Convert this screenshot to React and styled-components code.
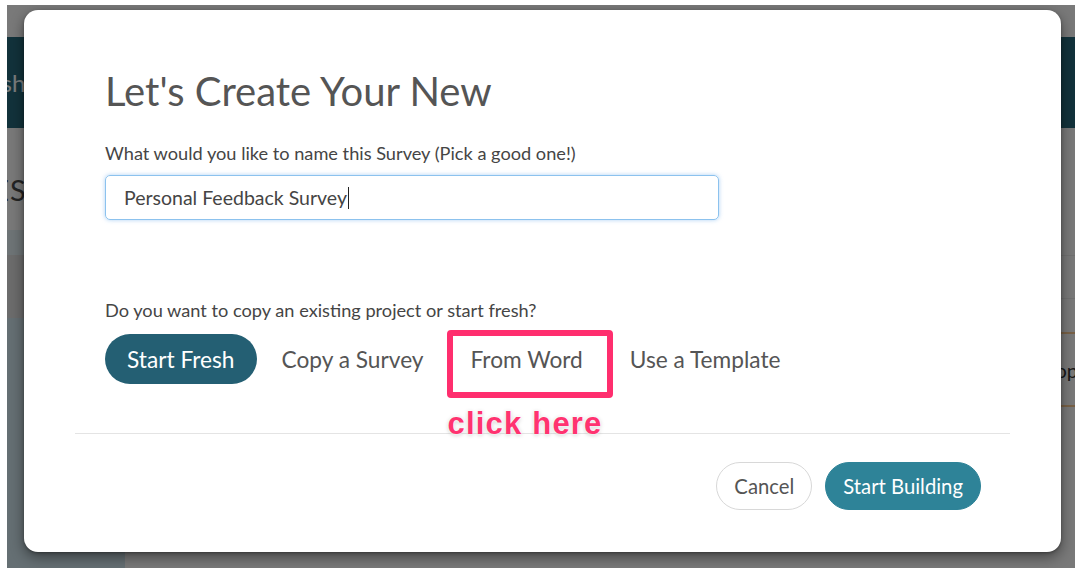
import React from "react";
import styled, { createGlobalStyle } from "styled-components";

const GlobalStyle = createGlobalStyle`
  html, body {
    margin: 0;
    padding: 0;
    background: #ffffff;
  }
  body {
    font-family: "Lato", "Noto Sans", sans-serif;
  }
  * { box-sizing: border-box; }
`;

/* ---------- page behind the dialog ---------- */

const Screen = styled.div`
  padding: 5px 0 0 7px;
  width: 1075px;
  height: 568px;
  overflow: hidden;
`;

const Frame = styled.div`
  position: relative;
  height: 563px;
  display: grid;
  grid-template-rows: 32px 91px 1fr;
  background: #f2f2f2;
  overflow: hidden;
`;

const TopStrip = styled.div`
  background: #f2f2f2;
`;

const Header = styled.header`
  background: #246477;
  display: flex;
  align-items: center;
  color: #f4f8f9;
  font-size: 24px;
  overflow: hidden;
`;

const HeaderTab = styled.span`
  margin-left: -58px;
  white-space: nowrap;
`;

const Body = styled.div`
  display: grid;
  grid-template-columns: 118px 1fr;
  min-height: 0;
`;

const Side = styled.aside`
  display: grid;
  grid-template-rows: 102px 25px 63px 1fr;
  min-height: 0;
`;

const SideTitle = styled.div`
  display: flex;
  align-items: flex-end;
  justify-content: flex-start;
  padding-bottom: 23px;
  font-size: 29px;
  color: #464646;
  overflow: hidden;
  white-space: nowrap;
`;

const SideTitleText = styled.span`
  margin-left: -93px;
  letter-spacing: 1px;
`;

const SideBand = styled.div`
  background: ${(p) => p.$tone};
`;

const Content = styled.main`
  display: flex;
  flex-direction: column;
  padding-top: 127px;
`;

const ListRow = styled.div`
  height: 44px;
  border-top: 1px solid #e2e2e2;
  border-bottom: 1px solid #e2e2e2;
`;

const Card = styled.div`
  margin-top: 33px;
  height: 75px;
  border-top: 2px solid #f3c58e;
  border-bottom: 2px solid #f3c58e;
  display: flex;
  align-items: center;
  justify-content: flex-end;
  font-size: 20px;
  color: #333;
  overflow: hidden;
`;

const CardAction = styled.span`
  margin-right: -3px;
`;

/* ---------- dialog ---------- */

const Overlay = styled.div`
  position: absolute;
  inset: 0;
  background: rgba(0, 0, 0, 0.5);
  padding: 5px 0 0 17px;
`;

const Modal = styled.section`
  width: 1037px;
  height: 542px;
  background: #ffffff;
  border-radius: 14px;
  box-shadow: 0 5px 14px rgba(0, 0, 0, 0.45), 0 1px 3px rgba(0, 0, 0, 0.3);
  padding-top: 57px;
  display: flex;
  flex-direction: column;
`;

const ModalBody = styled.div`
  padding: 0 81px;
  display: flex;
  flex-direction: column;
  align-items: flex-start;
`;

const Title = styled.h1`
  margin: 0;
  font-size: 40px;
  line-height: 48px;
  font-weight: 400;
  color: #555555;
`;

const Label = styled.p`
  margin: ${(p) => p.$gap}px 0 0;
  font-size: 18.2px;
  line-height: 22px;
  color: #454545;
`;

const NameField = styled.div`
  margin-top: 11px;
  width: 614px;
  height: 45px;
  border: 1px solid #8cc2ee;
  border-radius: 5px;
  box-shadow: 0 0 4px rgba(102, 170, 235, 0.55);
  padding: 0 18px;
  display: flex;
  align-items: center;
  font-size: 19.5px;
  color: #454545;
`;

const Caret = styled.span`
  display: inline-block;
  width: 1px;
  height: 22px;
  background: #222;
  margin-left: 1px;
`;

const Options = styled.div`
  margin-top: 13px;
  display: flex;
  gap: 3px;
`;

const Option = styled.button`
  position: relative;
  height: 50px;
  padding: 0 22px;
  border: none;
  border-radius: 25px;
  font-family: inherit;
  font-size: 22.7px;
  background: ${(p) => (p.$active ? "#245f73" : "transparent")};
  color: ${(p) => (p.$active ? "#ffffff" : "#555555")};
  cursor: pointer;
`;

const Highlight = styled.span`
  position: absolute;
  left: -2px;
  top: -4px;
  width: 166px;
  height: 68px;
  border: 6px solid #ff2e6e;
  border-radius: 4px;
  pointer-events: none;
`;

const Hint = styled.span`
  position: absolute;
  left: -1px;
  top: 72px;
  font-family: "Liberation Sans", Arial, sans-serif;
  font-weight: 700;
  font-size: 31px;
  line-height: 36px;
  letter-spacing: 1.2px;
  color: #ff3370;
  white-space: nowrap;
  text-shadow: 0 0 2px #fff, 0 0 3px #fff, 0 1px 4px rgba(0, 0, 0, 0.25);
`;

const Divider = styled.hr`
  margin: 49px 51px 0;
  border: none;
  height: 1px;
  background: #e4e4e4;
`;

const Footer = styled.div`
  margin-top: 28px;
  padding-right: 80px;
  display: flex;
  justify-content: flex-end;
  gap: 13px;
`;

const FooterButton = styled.button`
  height: 48px;
  padding: 0 17px;
  border-radius: 24px;
  font-family: inherit;
  font-size: 20.3px;
  border: 1px solid ${(p) => (p.$primary ? "#2e8398" : "#d8d8d8")};
  background: ${(p) => (p.$primary ? "#2e8398" : "#ffffff")};
  color: ${(p) => (p.$primary ? "#ffffff" : "#555555")};
  cursor: pointer;
`;

export default function App() {
  return (
    <Screen>
      <GlobalStyle />
      <Frame>
        <TopStrip />
        <Header>
          <HeaderTab>Publish</HeaderTab>
        </Header>
        <Body>
          <Side>
            <SideTitle>
              <SideTitleText>SURVES</SideTitleText>
            </SideTitle>
            <SideBand $tone="#dde8ec" />
            <SideBand $tone="#d9d9d9" />
            <SideBand $tone="#cadfe6" />
          </Side>
          <Content>
            <ListRow />
            <Card>
              <CardAction>Stop</CardAction>
            </Card>
          </Content>
        </Body>

        <Overlay>
          <Modal role="dialog" aria-labelledby="new-survey-title">
            <ModalBody>
              <Title id="new-survey-title">Let's Create Your New</Title>
              <Label $gap={27}>What would you like to name this Survey (Pick a good one!)</Label>
              <NameField role="textbox">
                Personal Feedback Survey
                <Caret />
              </NameField>
              <Label $gap={79}>Do you want to copy an existing project or start fresh?</Label>
              <Options>
                <Option $active>Start Fresh</Option>
                <Option>Copy a Survey</Option>
                <Option>
                  From Word
                  <Highlight />
                  <Hint>click here</Hint>
                </Option>
                <Option>Use a Template</Option>
              </Options>
            </ModalBody>
            <Divider />
            <Footer>
              <FooterButton>Cancel</FooterButton>
              <FooterButton $primary>Start Building</FooterButton>
            </Footer>
          </Modal>
        </Overlay>
      </Frame>
    </Screen>
  );
}
